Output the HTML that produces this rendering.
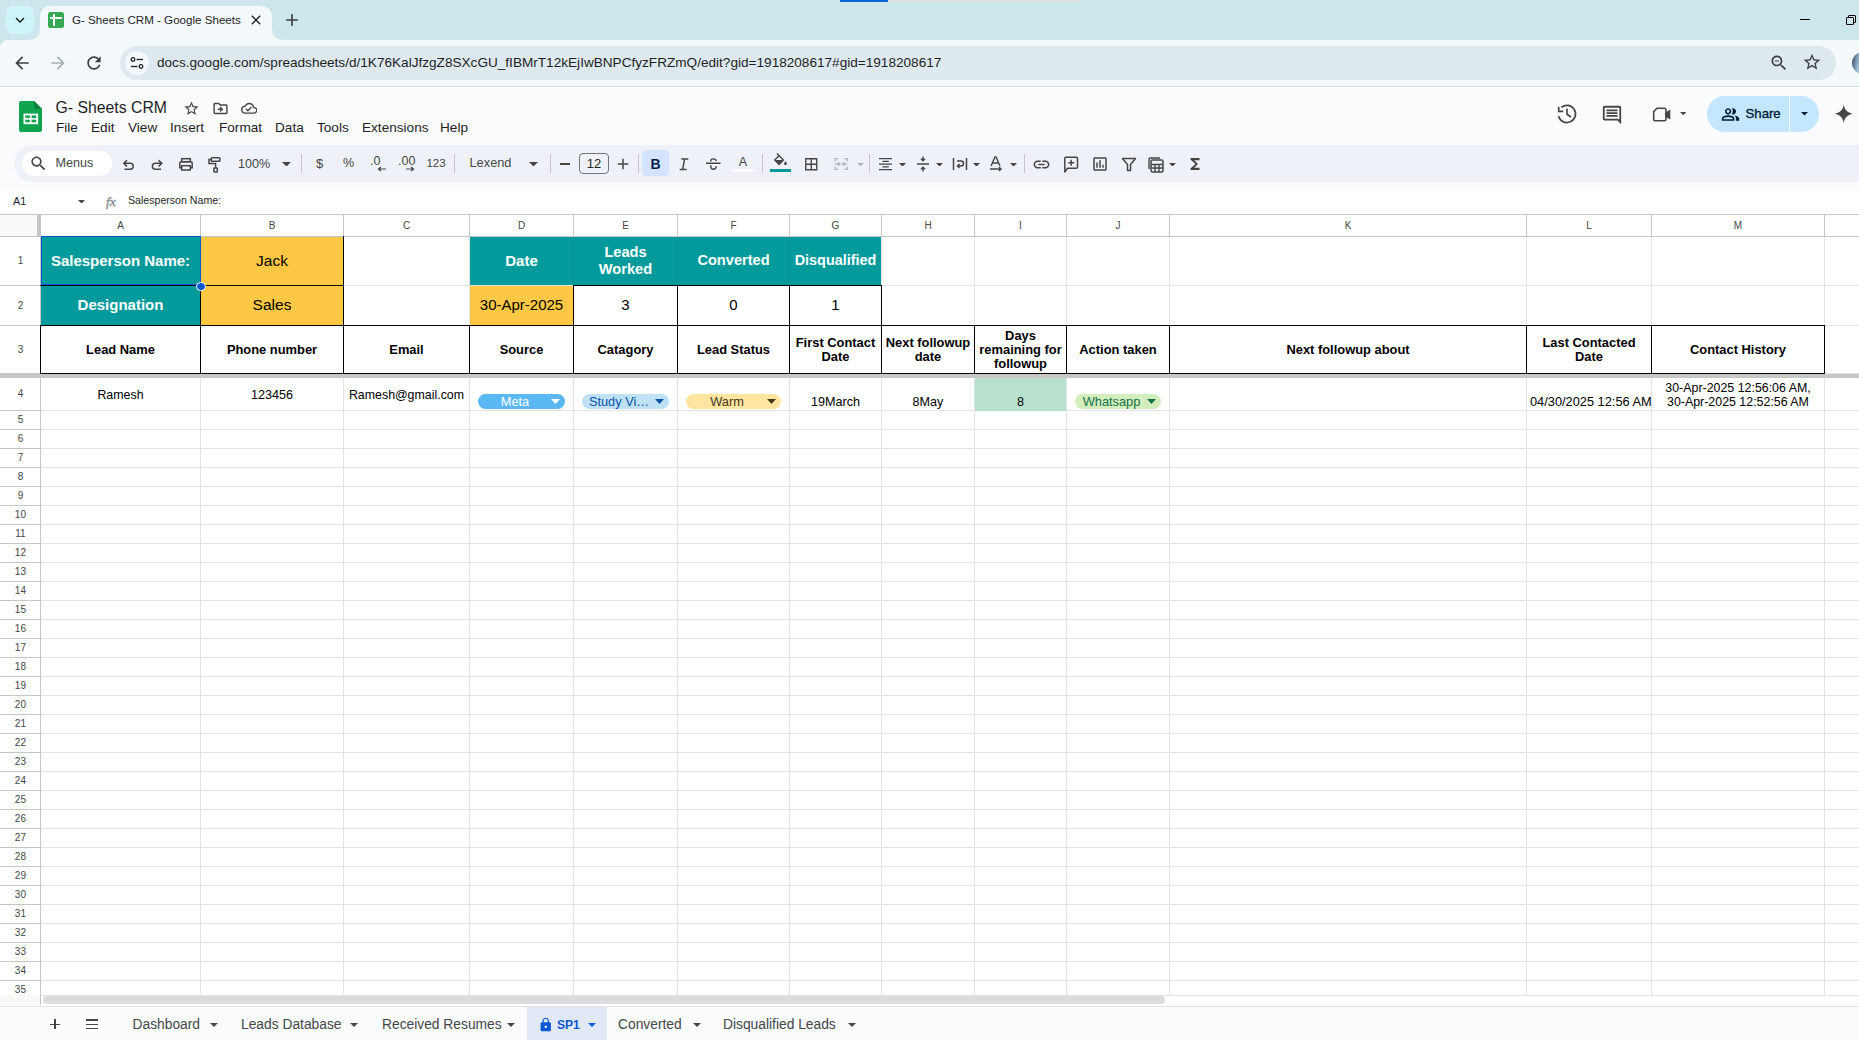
<!DOCTYPE html>
<html><head><meta charset="utf-8"><title>G- Sheets CRM - Google Sheets</title>
<style>
html,body{margin:0;padding:0;width:1859px;height:1040px;overflow:hidden;background:#f9fbfd;font-family:"Liberation Sans", sans-serif;}
body{position:relative}
div,svg{box-sizing:border-box}
</style></head><body>
<div style="position:absolute;left:0px;top:0px;width:1859px;height:40px;background:#cde6eb;"></div>
<div style="position:absolute;left:840px;top:0px;width:48px;height:1.5px;background:#0b63d6;"></div>
<div style="position:absolute;left:888px;top:0px;width:193px;height:1.5px;background:#e2e2e4;"></div>
<div style="position:absolute;left:6px;top:6px;width:28px;height:28px;background:#cff5fc;border-radius:8px"></div>
<svg style="position:absolute;left:10.5px;top:11.0px;width:18px;height:18px" viewBox="0 0 24 24" fill="#1f1f1f" ><path d="M16.59 8.59L12 13.17 7.41 8.59 6 10l6 6 6-6z"/></svg>
<div style="position:absolute;left:40px;top:6px;width:232px;height:40px;background:#f3f8fb;border-radius:10px 10px 0 0"></div>
<svg style="position:absolute;left:30px;top:30px;width:10px;height:10px" viewBox="0 0 10 10" fill="#f3f8fb" ><path d="M10 0V10H0A10 10 0 0 0 10 0Z"/></svg>
<svg style="position:absolute;left:272px;top:30px;width:10px;height:10px" viewBox="0 0 10 10" fill="#f3f8fb" ><path d="M0 0V10H10A10 10 0 0 1 0 0Z"/></svg>
<div style="position:absolute;left:48px;top:12px;width:16px;height:16px;background:#34a853;border-radius:2.5px"></div>
<div style="position:absolute;left:50px;top:17px;width:12px;height:2px;background:#ffffff;"></div>
<div style="position:absolute;left:53px;top:14px;width:2px;height:12px;background:#ffffff;"></div>
<div style="position:absolute;left:72px;top:14.3px;font-size:11.6px;line-height:11.6px;color:#1f1f1f;font-weight:normal;white-space:nowrap;">G- Sheets CRM - Google Sheets</div>
<svg style="position:absolute;left:248.0px;top:12.0px;width:16px;height:16px" viewBox="0 0 24 24" fill="#1f1f1f" ><path d="M19 6.41L17.59 5 12 10.59 6.41 5 5 6.41 10.59 12 5 17.59 6.41 19 12 13.41 17.59 19 19 17.59 13.41 12z"/></svg>
<svg style="position:absolute;left:282.0px;top:10.0px;width:20px;height:20px" viewBox="0 0 24 24" fill="#3c4043" ><path d="M19 13h-6v6h-2v-6H5v-2h6V5h2v6h6v2z"/></svg>
<div style="position:absolute;left:1800px;top:19px;width:10px;height:1px;background:#000000;"></div>
<div style="position:absolute;left:1848px;top:15px;width:8px;height:8px;background:transparent;border:1px solid #000;border-radius:1px"></div>
<div style="position:absolute;left:1846px;top:17px;width:8px;height:8px;background:#cde6eb;border:1px solid #000;border-radius:1px"></div>
<div style="position:absolute;left:0px;top:40px;width:1859px;height:46px;background:#f3f8fb;"></div>
<div style="position:absolute;left:0px;top:86px;width:1859px;height:1px;background:#d3dfe4;"></div>
<svg style="position:absolute;left:0px;top:40px;width:8px;height:8px" viewBox="0 0 8 8" fill="#cde6eb" ><path d="M0 0H8A8 8 0 0 0 0 8Z"/></svg>
<svg style="position:absolute;left:12.0px;top:53.0px;width:20px;height:20px" viewBox="0 0 24 24" fill="#3c4043" ><path d="M20 11H7.83l5.59-5.59L12 4l-8 8 8 8 1.41-1.41L7.83 13H20v-2z"/></svg>
<svg style="position:absolute;left:48.0px;top:53.0px;width:20px;height:20px" viewBox="0 0 24 24" fill="#a6aeb2" ><path d="M12 4l-1.41 1.41L16.17 11H4v2h12.17l-5.58 5.59L12 20l8-8z"/></svg>
<svg style="position:absolute;left:84.0px;top:53.0px;width:20px;height:20px" viewBox="0 0 24 24" fill="#3c4043" ><path d="M17.65 6.35C16.2 4.9 14.21 4 12 4c-4.42 0-7.99 3.58-7.99 8s3.57 8 7.99 8c3.73 0 6.84-2.55 7.73-6h-2.08c-.82 2.33-3.04 4-5.65 4-3.31 0-6-2.69-6-6s2.69-6 6-6c1.66 0 3.14.69 4.22 1.78L13 11h7V4l-2.35 2.35z"/></svg>
<div style="position:absolute;left:120px;top:46px;width:1716px;height:34px;background:#dde9ee;border-radius:17px"></div>
<div style="position:absolute;left:125px;top:51px;width:24px;height:24px;background:#f3f8fb;border-radius:12px"></div>
<svg style="position:absolute;left:130px;top:56px;width:14px;height:14px" viewBox="0 0 14 14" fill="none" ><circle cx="3" cy="3.5" r="1.8" fill="none" stroke="#1f1f1f" stroke-width="1.3"/><path d="M6.5 3.5H13" stroke="#1f1f1f" stroke-width="1.3"/><circle cx="11" cy="10.5" r="1.8" fill="none" stroke="#1f1f1f" stroke-width="1.3"/><path d="M1 10.5H7.5" stroke="#1f1f1f" stroke-width="1.3"/></svg>
<div style="position:absolute;left:157px;top:56.3px;font-size:13.6px;line-height:13.6px;color:#1f1f1f;font-weight:normal;white-space:nowrap;">docs.google.com/spreadsheets/d/1K76KalJfzgZ8SXcGU_fIBMrT12kEjIwBNPCfyzFRZmQ/edit?gid=1918208617#gid=1918208617</div>
<svg style="position:absolute;left:1769.0px;top:53.0px;width:20px;height:20px" viewBox="0 0 24 24" fill="#3c4043" ><path d="M15.5 14h-.79l-.28-.27C15.41 12.59 16 11.11 16 9.5 16 5.91 13.09 3 9.5 3S3 5.91 3 9.5 5.91 16 9.5 16c1.61 0 3.09-.59 4.23-1.57l.27.28v.79l5 4.99L20.49 19l-4.99-5zm-6 0C7.01 14 5 11.99 5 9.5S7.01 5 9.5 5 14 7.01 14 9.5 11.99 14 9.5 14zM7 9h5v1.2H7z"/></svg>
<svg style="position:absolute;left:1802.0px;top:52.0px;width:20px;height:20px" viewBox="0 0 24 24" fill="#3c4043" ><path d="M22 9.24l-7.19-.62L12 2 9.19 8.63 2 9.24l5.46 4.73L5.82 21 12 17.27 18.18 21l-1.63-7.03L22 9.24zM12 15.4l-3.76 2.27 1-4.28-3.32-2.88 4.38-.38L12 6.1l1.71 4.04 4.38.38-3.32 2.88 1 4.28L12 15.4z"/></svg>
<div style="position:absolute;left:1851.5px;top:51.5px;width:22px;height:22px;background:linear-gradient(100deg, #2a3f5c 0%, #a9c4d8 35%, #8aa6bf 55%, #24406a 80%);border-radius:11px"></div>
<div style="position:absolute;left:0px;top:87px;width:1859px;height:127px;background:#f9fbfd;"></div>
<svg style="position:absolute;left:19px;top:101px;width:23px;height:31px" viewBox="0 0 23 31" fill="none" ><path d="M2 0H15L23 8V29a2 2 0 0 1-2 2H2a2 2 0 0 1-2-2V2a2 2 0 0 1 2-2Z" fill="#0fa34f"/><path d="M15 0L23 8H17a2 2 0 0 1-2-2Z" fill="#0a7f3b"/><rect x="4.5" y="12.6" width="14.6" height="10.6" fill="#fff"/><rect x="6.3" y="14.4" width="4.6" height="2.6" fill="#0fa34f"/><rect x="12.6" y="14.4" width="4.6" height="2.6" fill="#0fa34f"/><rect x="6.3" y="18.7" width="4.6" height="2.6" fill="#0fa34f"/><rect x="12.6" y="18.7" width="4.6" height="2.6" fill="#0fa34f"/></svg>
<div style="position:absolute;left:55.5px;top:100.2px;font-size:15.8px;line-height:15.8px;color:#1f1f1f;font-weight:normal;white-space:nowrap;">G- Sheets CRM</div>
<svg style="position:absolute;left:183.0px;top:99.5px;width:17px;height:17px" viewBox="0 0 24 24" fill="#444746" ><path d="M22 9.24l-7.19-.62L12 2 9.19 8.63 2 9.24l5.46 4.73L5.82 21 12 17.27 18.18 21l-1.63-7.03L22 9.24zM12 15.4l-3.76 2.27 1-4.28-3.32-2.88 4.38-.38L12 6.1l1.71 4.04 4.38.38-3.32 2.88 1 4.28L12 15.4z"/></svg>
<svg style="position:absolute;left:212.0px;top:99.5px;width:17px;height:17px" viewBox="0 0 24 24" fill="#444746" ><path d="M20 6h-8l-2-2H4c-1.1 0-2 .9-2 2v12c0 1.1.9 2 2 2h16c1.1 0 2-.9 2-2V8c0-1.1-.9-2-2-2zm0 12H4V6h5.17l2 2H20v10zm-7.84-6H8v2h4.16l-1.59 1.59L11.99 17 16 13.01 11.99 9l-1.41 1.41L12.16 12z"/></svg>
<svg style="position:absolute;left:240.75px;top:100.05px;width:16.5px;height:16.5px" viewBox="0 0 24 24" fill="#444746" ><path d="M19.35 10.04C18.67 6.59 15.64 4 12 4 9.11 4 6.6 5.64 5.35 8.04 2.34 8.36 0 10.91 0 14c0 3.31 2.69 6 6 6h13c2.76 0 5-2.24 5-5 0-2.64-2.05-4.78-4.65-4.96zM19 18H6c-2.21 0-4-1.79-4-4 0-2.05 1.53-3.76 3.56-3.97l1.07-.11.5-.95C8.08 7.14 9.94 6 12 6c2.62 0 4.88 1.86 5.39 4.43l.3 1.5 1.53.11c1.56.1 2.78 1.41 2.78 2.96 0 1.65-1.35 3-3 3zm-9-3.82l-2.09-2.09L6.5 13.5 10 17l6.01-6.01-1.41-1.41z"/></svg>
<div style="position:absolute;left:56px;top:120.5px;font-size:13.6px;line-height:13.6px;color:#1f1f1f;font-weight:normal;white-space:nowrap;">File</div>
<div style="position:absolute;left:91px;top:120.5px;font-size:13.6px;line-height:13.6px;color:#1f1f1f;font-weight:normal;white-space:nowrap;">Edit</div>
<div style="position:absolute;left:128px;top:120.5px;font-size:13.6px;line-height:13.6px;color:#1f1f1f;font-weight:normal;white-space:nowrap;">View</div>
<div style="position:absolute;left:170px;top:120.5px;font-size:13.6px;line-height:13.6px;color:#1f1f1f;font-weight:normal;white-space:nowrap;">Insert</div>
<div style="position:absolute;left:219px;top:120.5px;font-size:13.6px;line-height:13.6px;color:#1f1f1f;font-weight:normal;white-space:nowrap;">Format</div>
<div style="position:absolute;left:275px;top:120.5px;font-size:13.6px;line-height:13.6px;color:#1f1f1f;font-weight:normal;white-space:nowrap;">Data</div>
<div style="position:absolute;left:317px;top:120.5px;font-size:13.6px;line-height:13.6px;color:#1f1f1f;font-weight:normal;white-space:nowrap;">Tools</div>
<div style="position:absolute;left:362px;top:120.5px;font-size:13.6px;line-height:13.6px;color:#1f1f1f;font-weight:normal;white-space:nowrap;">Extensions</div>
<div style="position:absolute;left:440px;top:120.5px;font-size:13.6px;line-height:13.6px;color:#1f1f1f;font-weight:normal;white-space:nowrap;">Help</div>
<svg style="position:absolute;left:0px;top:0px;width:1859px;height:1040px" viewBox="0 0 1859 1040" fill="none" ><g fill="none" stroke="#444746" stroke-width="1.7"><path d="M1558.6 116.2A8.6 8.6 0 1 0 1561.4 107.3"/><path d="M1558.7 106.8V111.3H1563.3"/><path d="M1567 108.8V114.3L1571 117"/></g></svg>
<svg style="position:absolute;left:1601.0px;top:104.0px;width:22px;height:22px" viewBox="0 0 24 24" fill="#444746" ><path d="M21.99 4c0-1.1-.89-2-1.99-2H4c-1.1 0-2 .9-2 2v12c0 1.1.9 2 2 2h14l4 4-.01-18zM20 4v13.17L18.83 16H4V4h16zM6 12h12v2H6zm0-3h12v2H6zm0-3h12v2H6z"/></svg>
<svg style="position:absolute;left:0px;top:0px;width:1859px;height:1040px" viewBox="0 0 1859 1040" fill="none" ><path d="M1657 108.3H1664.6Q1665.9 108.3 1665.9 109.6V119.5Q1665.9 120.8 1664.6 120.8H1655Q1653.7 120.8 1653.7 119.5V111.6Z" fill="none" stroke="#444746" stroke-width="1.6"/><path d="M1665.5 112.5L1670.3 109.6V119.6L1665.5 116.7Z" fill="#444746"/></svg>
<svg style="position:absolute;left:1679.75px;top:111.9px;width:6.5px;height:3.2px" viewBox="0 0 6.5 3.2" fill="#444746" ><path d="M0 0H6.5L3.25 3.2Z"/></svg>
<div style="position:absolute;left:1707px;top:96px;width:112px;height:36px;background:#c2e7ff;border-radius:18px"></div>
<div style="position:absolute;left:1789px;top:96px;width:1px;height:36px;background:#f9fbfd;"></div>
<svg style="position:absolute;left:1720.5px;top:104.5px;width:19px;height:19px" viewBox="0 0 24 24" fill="#001d35" ><path d="M16.67 13.13C18.04 14.06 19 15.32 19 17v3h4v-3c0-2.18-3.57-3.47-6.33-3.87zM15 12c2.21 0 4-1.79 4-4s-1.79-4-4-4c-.47 0-.91.1-1.33.24C14.5 5.27 15 6.58 15 8s-.5 2.73-1.33 3.76c.42.14.86.24 1.33.24zM9 12c2.21 0 4-1.79 4-4s-1.79-4-4-4-4 1.79-4 4 1.79 4 4 4zm0-6c1.1 0 2 .9 2 2s-.9 2-2 2-2-.9-2-2 .9-2 2-2zM9 13c-2.67 0-8 1.34-8 4v3h16v-3c0-2.66-5.33-4-8-4zm6 5H3v-.99C3.2 16.29 6.3 15 9 15s5.8 1.29 6 2v1z"/></svg>
<div style="position:absolute;left:1745.5px;top:107px;font-size:13.2px;line-height:13.2px;color:#001d35;font-weight:normal;white-space:nowrap;-webkit-text-stroke:0.35px #001d35">Share</div>
<svg style="position:absolute;left:1800.5px;top:112.45px;width:7px;height:3.5px" viewBox="0 0 7 3.5" fill="#001d35" ><path d="M0 0H7L3.5 3.5Z"/></svg>
<svg style="position:absolute;left:1834px;top:104px;width:19.5px;height:19.5px" viewBox="0 0 20 20" fill="#444746" ><path d="M10 0C10.3 5.6 14.4 9.7 20 10 14.4 10.3 10.3 14.4 10 20 9.7 14.4 5.6 10.3 0 10 5.6 9.7 9.7 5.6 10 0Z"/></svg>
<div style="position:absolute;left:14px;top:145px;width:1845px;height:37px;background:#eef2f8;border-radius:18.5px 0 0 18.5px"></div>
<div style="position:absolute;left:22px;top:151px;width:90px;height:25px;background:#ffffff;border-radius:12.5px"></div>
<svg style="position:absolute;left:29.0px;top:154.0px;width:19px;height:19px" viewBox="0 0 24 24" fill="#444746" ><path d="M15.5 14h-.79l-.28-.27C15.41 12.59 16 11.11 16 9.5 16 5.91 13.09 3 9.5 3S3 5.91 3 9.5 5.91 16 9.5 16c1.61 0 3.09-.59 4.23-1.57l.27.28v.79l5 4.99L20.49 19l-4.99-5zm-6 0C7.01 14 5 11.99 5 9.5S7.01 5 9.5 5 14 7.01 14 9.5 11.99 14 9.5 14z"/></svg>
<div style="position:absolute;left:55.5px;top:157px;font-size:12.6px;line-height:12.6px;color:#444746;font-weight:normal;white-space:nowrap;">Menus</div>
<svg style="position:absolute;left:0px;top:0px;width:1859px;height:1040px" viewBox="0 0 1859 1040" fill="none" ><g fill="none" stroke="#444746" stroke-width="1.5"><path d="M127 160.2L123.8 163.3 127 166.4M124 163.3H130.2A3 3 0 0 1 130.2 169.3H124.5"/><path d="M158.6 160.2L161.8 163.3 158.6 166.4M161.6 163.3H155.4A3 3 0 0 0 155.4 169.3H161"/><rect x="181.7" y="158.7" width="8.6" height="3"/><path d="M181.5 167.8H179.8V163.2Q179.8 161.8 181.2 161.8H190.8Q192.2 161.8 192.2 163.2V167.8H190.5"/><rect x="181.7" y="165.7" width="8.6" height="4.3"/><rect x="211.3" y="157.8" width="8.6" height="3.4" rx="0.8"/><path d="M211.3 159.5H209V163.6H215.6V167.8"/><rect x="213.9" y="168" width="3.4" height="4" rx="0.6"/></g></svg>
<div style="position:absolute;left:238px;top:157.5px;font-size:12.6px;line-height:12.6px;color:#444746;font-weight:normal;white-space:nowrap;">100%</div>
<svg style="position:absolute;left:281.5px;top:161.75px;width:9px;height:4.5px" viewBox="0 0 9 4.5" fill="#444746" ><path d="M0 0H9L4.5 4.5Z"/></svg>
<div style="position:absolute;left:301px;top:154px;width:1px;height:19px;background:#c7c7c7;"></div>
<div style="position:absolute;left:19.5px;width:600px;top:157.0px;text-align:center;font-size:13px;line-height:13px;color:#444746;font-weight:normal;white-space:nowrap;">$</div>
<div style="position:absolute;left:48.5px;width:600px;top:157.25px;text-align:center;font-size:12.5px;line-height:12.5px;color:#444746;font-weight:normal;white-space:nowrap;">%</div>
<div style="position:absolute;left:370px;top:154.5px;font-size:12.5px;line-height:12.5px;color:#444746;font-weight:normal;white-space:nowrap;">.0</div>
<svg style="position:absolute;left:377px;top:166px;width:10px;height:6px" viewBox="0 0 10 6" fill="none" ><path d="M9 3H2M4 1L1.5 3 4 5" fill="none" stroke="#444746" stroke-width="1.2"/></svg>
<div style="position:absolute;left:398px;top:154.5px;font-size:12.5px;line-height:12.5px;color:#444746;font-weight:normal;white-space:nowrap;">.00</div>
<svg style="position:absolute;left:405px;top:166px;width:10px;height:6px" viewBox="0 0 10 6" fill="none" ><path d="M1 3H8M6 1L8.5 3 6 5" fill="none" stroke="#444746" stroke-width="1.2"/></svg>
<div style="position:absolute;left:136px;width:600px;top:157.75px;text-align:center;font-size:11.5px;line-height:11.5px;color:#444746;font-weight:normal;white-space:nowrap;">123</div>
<div style="position:absolute;left:454px;top:154px;width:1px;height:19px;background:#c7c7c7;"></div>
<div style="position:absolute;left:469.5px;top:157px;font-size:12.8px;line-height:12.8px;color:#444746;font-weight:normal;white-space:nowrap;">Lexend</div>
<svg style="position:absolute;left:528.5px;top:161.75px;width:9px;height:4.5px" viewBox="0 0 9 4.5" fill="#444746" ><path d="M0 0H9L4.5 4.5Z"/></svg>
<div style="position:absolute;left:550px;top:154px;width:1px;height:19px;background:#c7c7c7;"></div>
<div style="position:absolute;left:559.5px;top:163.3px;width:10.5px;height:1.3px;background:#444746;"></div>
<div style="position:absolute;left:579px;top:153px;width:30px;height:21px;background:transparent;border:1px solid #747775;border-radius:4px;box-sizing:border-box"></div>
<div style="position:absolute;left:294px;width:600px;top:157.0px;text-align:center;font-size:13px;line-height:13px;color:#1f1f1f;font-weight:normal;white-space:nowrap;">12</div>
<svg style="position:absolute;left:614.0px;top:154.5px;width:18px;height:18px" viewBox="0 0 24 24" fill="#444746" ><path d="M19 13h-6v6h-2v-6H5v-2h6V5h2v6h6v2z"/></svg>
<div style="position:absolute;left:638px;top:154px;width:1px;height:19px;background:#c7c7c7;"></div>
<div style="position:absolute;left:642px;top:150px;width:27px;height:26px;background:#d3e3fd;border-radius:4px"></div>
<div style="position:absolute;left:355.5px;width:600px;top:157.0px;text-align:center;font-size:14px;line-height:14px;color:#041e49;font-weight:bold;white-space:nowrap;">B</div>
<svg style="position:absolute;left:0px;top:0px;width:1859px;height:1040px" viewBox="0 0 1859 1040" fill="none" ><path d="M681.3 159H688.3M679.6 169.5H686.6M684.6 159L682.6 169.5" fill="none" stroke="#444746" stroke-width="1.4"/></svg>
<svg style="position:absolute;left:0px;top:0px;width:1859px;height:1040px" viewBox="0 0 1859 1040" fill="none" ><path d="M706 163.3H720.5M710.6 161.6Q710.6 158.9 713.3 158.9Q716 158.9 716.3 161M710.7 165.2Q710.7 169.2 713.3 169.2Q716.2 169.2 716.2 166.3" fill="none" stroke="#444746" stroke-width="1.4"/></svg>
<div style="position:absolute;left:443px;width:600px;top:156.25px;text-align:center;font-size:12.5px;line-height:12.5px;color:#444746;font-weight:normal;white-space:nowrap;">A</div>
<div style="position:absolute;left:733px;top:169px;width:21px;height:3px;background:#ffffff;"></div>
<div style="position:absolute;left:762px;top:154px;width:1px;height:19px;background:#c7c7c7;"></div>
<svg style="position:absolute;left:771.5px;top:152.5px;width:17px;height:17px" viewBox="0 0 24 24" fill="#444746" ><path d="M16.56 8.94L7.62 0 6.21 1.41l2.38 2.38-5.15 5.15c-.59.59-.59 1.54 0 2.12l5.5 5.5c.29.29.68.44 1.06.44s.77-.15 1.06-.44l5.5-5.5c.59-.58.59-1.53 0-2.12zM5.21 10L10 5.21 14.79 10H5.21zM19 11.5s-2 2.17-2 3.5c0 1.1.9 2 2 2s2-.9 2-2c0-1.33-2-3.5-2-3.5z"/></svg>
<div style="position:absolute;left:770px;top:169px;width:21px;height:3px;background:#00999a;"></div>
<svg style="position:absolute;left:803.05px;top:155.75px;width:16.5px;height:16.5px" viewBox="0 0 24 24" fill="#444746" ><path d="M3 3v18h18V3H3zm8 16H5v-6h6v6zm0-8H5V5h6v6zm8 8h-6v-6h6v6zm0-8h-6V5h6v6z"/></svg>
<svg style="position:absolute;left:0px;top:0px;width:1859px;height:1040px" viewBox="0 0 1859 1040" fill="none" ><path d="M838.2 158.6H835.2V161.2M835.2 166.6V169.4H838.2M844 158.6H847.3V161.2M847.3 166.6V169.4H844M835.2 164H839.8M838 162.2L839.9 164 838 165.8M847.3 164H842.6M844.4 162.2L842.5 164 844.4 165.8" fill="none" stroke="#b3b6ba" stroke-width="1.4"/></svg>
<svg style="position:absolute;left:856.7px;top:162.60000000000002px;width:7px;height:3.4px" viewBox="0 0 7 3.4" fill="#b3b6ba" ><path d="M0 0H7L3.5 3.4Z"/></svg>
<div style="position:absolute;left:869px;top:154px;width:1px;height:19px;background:#c7c7c7;"></div>
<svg style="position:absolute;left:0px;top:0px;width:1859px;height:1040px" viewBox="0 0 1859 1040" fill="none" ><path d="M879 158.6H892M882.5 161.3H888.8M879 164H892M882.5 166.8H888.8M879 169.5H892" stroke="#444746" stroke-width="1.25"/></svg>
<svg style="position:absolute;left:899.0px;top:162.6px;width:7px;height:3.6px" viewBox="0 0 7 3.6" fill="#444746" ><path d="M0 0H7L3.5 3.6Z"/></svg>
<svg style="position:absolute;left:914.0px;top:155.0px;width:18px;height:18px" viewBox="0 0 24 24" fill="#444746" ><path d="M8 19h3v3h2v-3h3l-4-4-4 4zm8-14h-3V2h-2v3H8l4 4 4-4zM4 11v2h16v-2H4z"/></svg>
<svg style="position:absolute;left:936.0px;top:162.6px;width:7px;height:3.6px" viewBox="0 0 7 3.6" fill="#444746" ><path d="M0 0H7L3.5 3.6Z"/></svg>
<svg style="position:absolute;left:952px;top:156px;width:16px;height:16px" viewBox="0 0 16 16" fill="none" ><path d="M1.5 2V14M14.5 2V14M5 5H9a2.5 2.5 0 0 1 0 5H6M7.5 8L5.5 10 7.5 12" fill="none" stroke="#444746" stroke-width="1.5"/></svg>
<svg style="position:absolute;left:972.5px;top:162.6px;width:7px;height:3.6px" viewBox="0 0 7 3.6" fill="#444746" ><path d="M0 0H7L3.5 3.6Z"/></svg>
<svg style="position:absolute;left:988px;top:155px;width:17px;height:17px" viewBox="0 0 17 17" fill="none" ><path d="M3 11L7 2h1l4 9M4.5 8H10.5M2 14H13M11 12l2 2-2 2" fill="none" stroke="#444746" stroke-width="1.4"/></svg>
<svg style="position:absolute;left:1009.5px;top:162.6px;width:7px;height:3.6px" viewBox="0 0 7 3.6" fill="#444746" ><path d="M0 0H7L3.5 3.6Z"/></svg>
<div style="position:absolute;left:1024px;top:154px;width:1px;height:19px;background:#c7c7c7;"></div>
<svg style="position:absolute;left:1032.0px;top:154.5px;width:19px;height:19px" viewBox="0 0 24 24" fill="#444746" ><path d="M3.9 12c0-1.71 1.39-3.1 3.1-3.1h4V7H7c-2.76 0-5 2.24-5 5s2.24 5 5 5h4v-1.9H7c-1.71 0-3.1-1.39-3.1-3.1zM8 13h8v-2H8v2zm9-6h-4v1.9h4c1.71 0 3.1 1.39 3.1 3.1s-1.39 3.1-3.1 3.1h-4V17h4c2.76 0 5-2.24 5-5s-2.24-5-5-5z"/></svg>
<svg style="position:absolute;left:0px;top:0px;width:1859px;height:1040px" viewBox="0 0 1859 1040" fill="none" ><path d="M1064.8 172V158.3Q1064.8 157.3 1065.8 157.3H1076.5Q1077.5 157.3 1077.5 158.3V167.2Q1077.5 168.2 1076.5 168.2H1067.6Z" fill="none" stroke="#444746" stroke-width="1.5" stroke-linejoin="round"/><path d="M1071.2 159.8V165.8M1068.2 162.8H1074.2" stroke="#444746" stroke-width="1.5"/></svg>
<svg style="position:absolute;left:1091.0px;top:155.0px;width:18px;height:18px" viewBox="0 0 24 24" fill="#444746" ><path d="M19 3H5c-1.1 0-2 .9-2 2v14c0 1.1.9 2 2 2h14c1.1 0 2-.9 2-2V5c0-1.1-.9-2-2-2zm0 16H5V5h14v14zM7 10h2v7H7zm4-3h2v10h-2zm4 6h2v4h-2z"/></svg>
<svg style="position:absolute;left:1121px;top:157px;width:16px;height:15px" viewBox="0 0 16 15" fill="none" ><path d="M1.5 1.5H14.5L9.5 7.5V13.5H6.5V7.5Z" fill="none" stroke="#444746" stroke-width="1.5" stroke-linejoin="round"/></svg>
<svg style="position:absolute;left:1147px;top:156px;width:17px;height:17px" viewBox="0 0 17 17" fill="none" ><rect x="4" y="4" width="12" height="12" rx="1.5" fill="none" stroke="#444746" stroke-width="1.5"/><path d="M2 13V3.5A1.5 1.5 0 0 1 3.5 2H13M4 8.5H16M4 12H16M8 8.5V16M12 8.5V16" fill="none" stroke="#444746" stroke-width="1.4"/></svg>
<svg style="position:absolute;left:1169.0px;top:162.6px;width:7px;height:3.6px" viewBox="0 0 7 3.6" fill="#444746" ><path d="M0 0H7L3.5 3.6Z"/></svg>
<svg style="position:absolute;left:1186.0px;top:155.0px;width:18px;height:18px" viewBox="0 0 24 24" fill="#444746" ><path d="M18 4H6v2l6.5 6L6 18v2h12v-3h-7l5-5-5-5h7z"/></svg>
<div style="position:absolute;left:0px;top:189px;width:1859px;height:25px;background:#ffffff;"></div>
<div style="position:absolute;left:13px;top:196px;font-size:10.8px;line-height:10.8px;color:#1f1f1f;font-weight:normal;white-space:nowrap;">A1</div>
<svg style="position:absolute;left:77.7px;top:199.79999999999998px;width:7px;height:3.6px" viewBox="0 0 7 3.6" fill="#444746" ><path d="M0 0H7L3.5 3.6Z"/></svg>
<div style="position:absolute;left:106px;top:195px;font-size:13.5px;line-height:13.5px;color:#80868b;font-weight:normal;white-space:nowrap;font-family:'Liberation Serif';font-style:italic;-webkit-text-stroke:0.3px #80868b">fx</div>
<div style="position:absolute;left:128px;top:195px;font-size:10.6px;line-height:10.6px;color:#1f1f1f;font-weight:normal;white-space:nowrap;">Salesperson Name:</div>
<div style="position:absolute;left:0px;top:215px;width:1859px;height:21px;background:#ffffff;"></div>
<div style="position:absolute;left:0px;top:215px;width:37px;height:21px;background:#f8f9fa;"></div>
<div style="position:absolute;left:0px;top:237px;width:1859px;height:758px;background:#ffffff;"></div>
<div style="position:absolute;left:41px;top:285px;width:1818px;height:1px;background:#e2e3e3;"></div>
<div style="position:absolute;left:0px;top:285px;width:40px;height:1px;background:#c4c7c5;"></div>
<div style="position:absolute;left:41px;top:325px;width:1818px;height:1px;background:#e2e3e3;"></div>
<div style="position:absolute;left:0px;top:325px;width:40px;height:1px;background:#c4c7c5;"></div>
<div style="position:absolute;left:41px;top:373px;width:1818px;height:1px;background:#e2e3e3;"></div>
<div style="position:absolute;left:0px;top:373px;width:40px;height:1px;background:#c4c7c5;"></div>
<div style="position:absolute;left:41px;top:410px;width:1818px;height:1px;background:#e2e3e3;"></div>
<div style="position:absolute;left:0px;top:410px;width:40px;height:1px;background:#c4c7c5;"></div>
<div style="position:absolute;left:41px;top:429px;width:1818px;height:1px;background:#e2e3e3;"></div>
<div style="position:absolute;left:0px;top:429px;width:40px;height:1px;background:#c4c7c5;"></div>
<div style="position:absolute;left:41px;top:448px;width:1818px;height:1px;background:#e2e3e3;"></div>
<div style="position:absolute;left:0px;top:448px;width:40px;height:1px;background:#c4c7c5;"></div>
<div style="position:absolute;left:41px;top:467px;width:1818px;height:1px;background:#e2e3e3;"></div>
<div style="position:absolute;left:0px;top:467px;width:40px;height:1px;background:#c4c7c5;"></div>
<div style="position:absolute;left:41px;top:486px;width:1818px;height:1px;background:#e2e3e3;"></div>
<div style="position:absolute;left:0px;top:486px;width:40px;height:1px;background:#c4c7c5;"></div>
<div style="position:absolute;left:41px;top:505px;width:1818px;height:1px;background:#e2e3e3;"></div>
<div style="position:absolute;left:0px;top:505px;width:40px;height:1px;background:#c4c7c5;"></div>
<div style="position:absolute;left:41px;top:524px;width:1818px;height:1px;background:#e2e3e3;"></div>
<div style="position:absolute;left:0px;top:524px;width:40px;height:1px;background:#c4c7c5;"></div>
<div style="position:absolute;left:41px;top:543px;width:1818px;height:1px;background:#e2e3e3;"></div>
<div style="position:absolute;left:0px;top:543px;width:40px;height:1px;background:#c4c7c5;"></div>
<div style="position:absolute;left:41px;top:562px;width:1818px;height:1px;background:#e2e3e3;"></div>
<div style="position:absolute;left:0px;top:562px;width:40px;height:1px;background:#c4c7c5;"></div>
<div style="position:absolute;left:41px;top:581px;width:1818px;height:1px;background:#e2e3e3;"></div>
<div style="position:absolute;left:0px;top:581px;width:40px;height:1px;background:#c4c7c5;"></div>
<div style="position:absolute;left:41px;top:600px;width:1818px;height:1px;background:#e2e3e3;"></div>
<div style="position:absolute;left:0px;top:600px;width:40px;height:1px;background:#c4c7c5;"></div>
<div style="position:absolute;left:41px;top:619px;width:1818px;height:1px;background:#e2e3e3;"></div>
<div style="position:absolute;left:0px;top:619px;width:40px;height:1px;background:#c4c7c5;"></div>
<div style="position:absolute;left:41px;top:638px;width:1818px;height:1px;background:#e2e3e3;"></div>
<div style="position:absolute;left:0px;top:638px;width:40px;height:1px;background:#c4c7c5;"></div>
<div style="position:absolute;left:41px;top:657px;width:1818px;height:1px;background:#e2e3e3;"></div>
<div style="position:absolute;left:0px;top:657px;width:40px;height:1px;background:#c4c7c5;"></div>
<div style="position:absolute;left:41px;top:676px;width:1818px;height:1px;background:#e2e3e3;"></div>
<div style="position:absolute;left:0px;top:676px;width:40px;height:1px;background:#c4c7c5;"></div>
<div style="position:absolute;left:41px;top:695px;width:1818px;height:1px;background:#e2e3e3;"></div>
<div style="position:absolute;left:0px;top:695px;width:40px;height:1px;background:#c4c7c5;"></div>
<div style="position:absolute;left:41px;top:714px;width:1818px;height:1px;background:#e2e3e3;"></div>
<div style="position:absolute;left:0px;top:714px;width:40px;height:1px;background:#c4c7c5;"></div>
<div style="position:absolute;left:41px;top:733px;width:1818px;height:1px;background:#e2e3e3;"></div>
<div style="position:absolute;left:0px;top:733px;width:40px;height:1px;background:#c4c7c5;"></div>
<div style="position:absolute;left:41px;top:752px;width:1818px;height:1px;background:#e2e3e3;"></div>
<div style="position:absolute;left:0px;top:752px;width:40px;height:1px;background:#c4c7c5;"></div>
<div style="position:absolute;left:41px;top:771px;width:1818px;height:1px;background:#e2e3e3;"></div>
<div style="position:absolute;left:0px;top:771px;width:40px;height:1px;background:#c4c7c5;"></div>
<div style="position:absolute;left:41px;top:790px;width:1818px;height:1px;background:#e2e3e3;"></div>
<div style="position:absolute;left:0px;top:790px;width:40px;height:1px;background:#c4c7c5;"></div>
<div style="position:absolute;left:41px;top:809px;width:1818px;height:1px;background:#e2e3e3;"></div>
<div style="position:absolute;left:0px;top:809px;width:40px;height:1px;background:#c4c7c5;"></div>
<div style="position:absolute;left:41px;top:828px;width:1818px;height:1px;background:#e2e3e3;"></div>
<div style="position:absolute;left:0px;top:828px;width:40px;height:1px;background:#c4c7c5;"></div>
<div style="position:absolute;left:41px;top:847px;width:1818px;height:1px;background:#e2e3e3;"></div>
<div style="position:absolute;left:0px;top:847px;width:40px;height:1px;background:#c4c7c5;"></div>
<div style="position:absolute;left:41px;top:866px;width:1818px;height:1px;background:#e2e3e3;"></div>
<div style="position:absolute;left:0px;top:866px;width:40px;height:1px;background:#c4c7c5;"></div>
<div style="position:absolute;left:41px;top:885px;width:1818px;height:1px;background:#e2e3e3;"></div>
<div style="position:absolute;left:0px;top:885px;width:40px;height:1px;background:#c4c7c5;"></div>
<div style="position:absolute;left:41px;top:904px;width:1818px;height:1px;background:#e2e3e3;"></div>
<div style="position:absolute;left:0px;top:904px;width:40px;height:1px;background:#c4c7c5;"></div>
<div style="position:absolute;left:41px;top:923px;width:1818px;height:1px;background:#e2e3e3;"></div>
<div style="position:absolute;left:0px;top:923px;width:40px;height:1px;background:#c4c7c5;"></div>
<div style="position:absolute;left:41px;top:942px;width:1818px;height:1px;background:#e2e3e3;"></div>
<div style="position:absolute;left:0px;top:942px;width:40px;height:1px;background:#c4c7c5;"></div>
<div style="position:absolute;left:41px;top:961px;width:1818px;height:1px;background:#e2e3e3;"></div>
<div style="position:absolute;left:0px;top:961px;width:40px;height:1px;background:#c4c7c5;"></div>
<div style="position:absolute;left:41px;top:980px;width:1818px;height:1px;background:#e2e3e3;"></div>
<div style="position:absolute;left:0px;top:980px;width:40px;height:1px;background:#c4c7c5;"></div>
<div style="position:absolute;left:200px;top:215px;width:1px;height:21px;background:#c4c7c5;"></div>
<div style="position:absolute;left:200px;top:237px;width:1px;height:758px;background:#e2e3e3;"></div>
<div style="position:absolute;left:343px;top:215px;width:1px;height:21px;background:#c4c7c5;"></div>
<div style="position:absolute;left:343px;top:237px;width:1px;height:758px;background:#e2e3e3;"></div>
<div style="position:absolute;left:469px;top:215px;width:1px;height:21px;background:#c4c7c5;"></div>
<div style="position:absolute;left:469px;top:237px;width:1px;height:758px;background:#e2e3e3;"></div>
<div style="position:absolute;left:573px;top:215px;width:1px;height:21px;background:#c4c7c5;"></div>
<div style="position:absolute;left:573px;top:237px;width:1px;height:758px;background:#e2e3e3;"></div>
<div style="position:absolute;left:677px;top:215px;width:1px;height:21px;background:#c4c7c5;"></div>
<div style="position:absolute;left:677px;top:237px;width:1px;height:758px;background:#e2e3e3;"></div>
<div style="position:absolute;left:789px;top:215px;width:1px;height:21px;background:#c4c7c5;"></div>
<div style="position:absolute;left:789px;top:237px;width:1px;height:758px;background:#e2e3e3;"></div>
<div style="position:absolute;left:881px;top:215px;width:1px;height:21px;background:#c4c7c5;"></div>
<div style="position:absolute;left:881px;top:237px;width:1px;height:758px;background:#e2e3e3;"></div>
<div style="position:absolute;left:974px;top:215px;width:1px;height:21px;background:#c4c7c5;"></div>
<div style="position:absolute;left:974px;top:237px;width:1px;height:758px;background:#e2e3e3;"></div>
<div style="position:absolute;left:1066px;top:215px;width:1px;height:21px;background:#c4c7c5;"></div>
<div style="position:absolute;left:1066px;top:237px;width:1px;height:758px;background:#e2e3e3;"></div>
<div style="position:absolute;left:1169px;top:215px;width:1px;height:21px;background:#c4c7c5;"></div>
<div style="position:absolute;left:1169px;top:237px;width:1px;height:758px;background:#e2e3e3;"></div>
<div style="position:absolute;left:1526px;top:215px;width:1px;height:21px;background:#c4c7c5;"></div>
<div style="position:absolute;left:1526px;top:237px;width:1px;height:758px;background:#e2e3e3;"></div>
<div style="position:absolute;left:1651px;top:215px;width:1px;height:21px;background:#c4c7c5;"></div>
<div style="position:absolute;left:1651px;top:237px;width:1px;height:758px;background:#e2e3e3;"></div>
<div style="position:absolute;left:1824px;top:215px;width:1px;height:21px;background:#c4c7c5;"></div>
<div style="position:absolute;left:1824px;top:237px;width:1px;height:758px;background:#e2e3e3;"></div>
<div style="position:absolute;left:1859px;top:215px;width:1px;height:21px;background:#c4c7c5;"></div>
<div style="position:absolute;left:1859px;top:237px;width:1px;height:758px;background:#e2e3e3;"></div>
<div style="position:absolute;left:0px;top:214px;width:1859px;height:1px;background:#c4c7c5;"></div>
<div style="position:absolute;left:0px;top:236px;width:1859px;height:1px;background:#c4c7c5;"></div>
<div style="position:absolute;left:40px;top:237px;width:1px;height:758px;background:#c4c7c5;"></div>
<div style="position:absolute;left:37px;top:214px;width:4px;height:23px;background:#c4c7c5;"></div>
<div style="position:absolute;left:-179.5px;width:600px;top:221.0px;text-align:center;font-size:10px;line-height:10px;color:#444746;font-weight:normal;white-space:nowrap;">A</div>
<div style="position:absolute;left:-28.0px;width:600px;top:221.0px;text-align:center;font-size:10px;line-height:10px;color:#444746;font-weight:normal;white-space:nowrap;">B</div>
<div style="position:absolute;left:106.5px;width:600px;top:221.0px;text-align:center;font-size:10px;line-height:10px;color:#444746;font-weight:normal;white-space:nowrap;">C</div>
<div style="position:absolute;left:221.5px;width:600px;top:221.0px;text-align:center;font-size:10px;line-height:10px;color:#444746;font-weight:normal;white-space:nowrap;">D</div>
<div style="position:absolute;left:325.5px;width:600px;top:221.0px;text-align:center;font-size:10px;line-height:10px;color:#444746;font-weight:normal;white-space:nowrap;">E</div>
<div style="position:absolute;left:433.5px;width:600px;top:221.0px;text-align:center;font-size:10px;line-height:10px;color:#444746;font-weight:normal;white-space:nowrap;">F</div>
<div style="position:absolute;left:535.5px;width:600px;top:221.0px;text-align:center;font-size:10px;line-height:10px;color:#444746;font-weight:normal;white-space:nowrap;">G</div>
<div style="position:absolute;left:628.0px;width:600px;top:221.0px;text-align:center;font-size:10px;line-height:10px;color:#444746;font-weight:normal;white-space:nowrap;">H</div>
<div style="position:absolute;left:720.5px;width:600px;top:221.0px;text-align:center;font-size:10px;line-height:10px;color:#444746;font-weight:normal;white-space:nowrap;">I</div>
<div style="position:absolute;left:818.0px;width:600px;top:221.0px;text-align:center;font-size:10px;line-height:10px;color:#444746;font-weight:normal;white-space:nowrap;">J</div>
<div style="position:absolute;left:1048.0px;width:600px;top:221.0px;text-align:center;font-size:10px;line-height:10px;color:#444746;font-weight:normal;white-space:nowrap;">K</div>
<div style="position:absolute;left:1289.0px;width:600px;top:221.0px;text-align:center;font-size:10px;line-height:10px;color:#444746;font-weight:normal;white-space:nowrap;">L</div>
<div style="position:absolute;left:1438.0px;width:600px;top:221.0px;text-align:center;font-size:10px;line-height:10px;color:#444746;font-weight:normal;white-space:nowrap;">M</div>
<div style="position:absolute;left:-279.6px;width:600px;top:256.4px;text-align:center;font-size:10px;line-height:10px;color:#444746;font-weight:normal;white-space:nowrap;">1</div>
<div style="position:absolute;left:-279.6px;width:600px;top:300.9px;text-align:center;font-size:10px;line-height:10px;color:#444746;font-weight:normal;white-space:nowrap;">2</div>
<div style="position:absolute;left:-279.6px;width:600px;top:344.9px;text-align:center;font-size:10px;line-height:10px;color:#444746;font-weight:normal;white-space:nowrap;">3</div>
<div style="position:absolute;left:-279.6px;width:600px;top:389.4px;text-align:center;font-size:10px;line-height:10px;color:#444746;font-weight:normal;white-space:nowrap;">4</div>
<div style="position:absolute;left:-279.6px;width:600px;top:415.4px;text-align:center;font-size:10px;line-height:10px;color:#444746;font-weight:normal;white-space:nowrap;">5</div>
<div style="position:absolute;left:-279.6px;width:600px;top:434.4px;text-align:center;font-size:10px;line-height:10px;color:#444746;font-weight:normal;white-space:nowrap;">6</div>
<div style="position:absolute;left:-279.6px;width:600px;top:453.4px;text-align:center;font-size:10px;line-height:10px;color:#444746;font-weight:normal;white-space:nowrap;">7</div>
<div style="position:absolute;left:-279.6px;width:600px;top:472.4px;text-align:center;font-size:10px;line-height:10px;color:#444746;font-weight:normal;white-space:nowrap;">8</div>
<div style="position:absolute;left:-279.6px;width:600px;top:491.4px;text-align:center;font-size:10px;line-height:10px;color:#444746;font-weight:normal;white-space:nowrap;">9</div>
<div style="position:absolute;left:-279.6px;width:600px;top:510.4px;text-align:center;font-size:10px;line-height:10px;color:#444746;font-weight:normal;white-space:nowrap;">10</div>
<div style="position:absolute;left:-279.6px;width:600px;top:529.4px;text-align:center;font-size:10px;line-height:10px;color:#444746;font-weight:normal;white-space:nowrap;">11</div>
<div style="position:absolute;left:-279.6px;width:600px;top:548.4px;text-align:center;font-size:10px;line-height:10px;color:#444746;font-weight:normal;white-space:nowrap;">12</div>
<div style="position:absolute;left:-279.6px;width:600px;top:567.4px;text-align:center;font-size:10px;line-height:10px;color:#444746;font-weight:normal;white-space:nowrap;">13</div>
<div style="position:absolute;left:-279.6px;width:600px;top:586.4px;text-align:center;font-size:10px;line-height:10px;color:#444746;font-weight:normal;white-space:nowrap;">14</div>
<div style="position:absolute;left:-279.6px;width:600px;top:605.4px;text-align:center;font-size:10px;line-height:10px;color:#444746;font-weight:normal;white-space:nowrap;">15</div>
<div style="position:absolute;left:-279.6px;width:600px;top:624.4px;text-align:center;font-size:10px;line-height:10px;color:#444746;font-weight:normal;white-space:nowrap;">16</div>
<div style="position:absolute;left:-279.6px;width:600px;top:643.4px;text-align:center;font-size:10px;line-height:10px;color:#444746;font-weight:normal;white-space:nowrap;">17</div>
<div style="position:absolute;left:-279.6px;width:600px;top:662.4px;text-align:center;font-size:10px;line-height:10px;color:#444746;font-weight:normal;white-space:nowrap;">18</div>
<div style="position:absolute;left:-279.6px;width:600px;top:681.4px;text-align:center;font-size:10px;line-height:10px;color:#444746;font-weight:normal;white-space:nowrap;">19</div>
<div style="position:absolute;left:-279.6px;width:600px;top:700.4px;text-align:center;font-size:10px;line-height:10px;color:#444746;font-weight:normal;white-space:nowrap;">20</div>
<div style="position:absolute;left:-279.6px;width:600px;top:719.4px;text-align:center;font-size:10px;line-height:10px;color:#444746;font-weight:normal;white-space:nowrap;">21</div>
<div style="position:absolute;left:-279.6px;width:600px;top:738.4px;text-align:center;font-size:10px;line-height:10px;color:#444746;font-weight:normal;white-space:nowrap;">22</div>
<div style="position:absolute;left:-279.6px;width:600px;top:757.4px;text-align:center;font-size:10px;line-height:10px;color:#444746;font-weight:normal;white-space:nowrap;">23</div>
<div style="position:absolute;left:-279.6px;width:600px;top:776.4px;text-align:center;font-size:10px;line-height:10px;color:#444746;font-weight:normal;white-space:nowrap;">24</div>
<div style="position:absolute;left:-279.6px;width:600px;top:795.4px;text-align:center;font-size:10px;line-height:10px;color:#444746;font-weight:normal;white-space:nowrap;">25</div>
<div style="position:absolute;left:-279.6px;width:600px;top:814.4px;text-align:center;font-size:10px;line-height:10px;color:#444746;font-weight:normal;white-space:nowrap;">26</div>
<div style="position:absolute;left:-279.6px;width:600px;top:833.4px;text-align:center;font-size:10px;line-height:10px;color:#444746;font-weight:normal;white-space:nowrap;">27</div>
<div style="position:absolute;left:-279.6px;width:600px;top:852.4px;text-align:center;font-size:10px;line-height:10px;color:#444746;font-weight:normal;white-space:nowrap;">28</div>
<div style="position:absolute;left:-279.6px;width:600px;top:871.4px;text-align:center;font-size:10px;line-height:10px;color:#444746;font-weight:normal;white-space:nowrap;">29</div>
<div style="position:absolute;left:-279.6px;width:600px;top:890.4px;text-align:center;font-size:10px;line-height:10px;color:#444746;font-weight:normal;white-space:nowrap;">30</div>
<div style="position:absolute;left:-279.6px;width:600px;top:909.4px;text-align:center;font-size:10px;line-height:10px;color:#444746;font-weight:normal;white-space:nowrap;">31</div>
<div style="position:absolute;left:-279.6px;width:600px;top:928.4px;text-align:center;font-size:10px;line-height:10px;color:#444746;font-weight:normal;white-space:nowrap;">32</div>
<div style="position:absolute;left:-279.6px;width:600px;top:947.4px;text-align:center;font-size:10px;line-height:10px;color:#444746;font-weight:normal;white-space:nowrap;">33</div>
<div style="position:absolute;left:-279.6px;width:600px;top:966.4px;text-align:center;font-size:10px;line-height:10px;color:#444746;font-weight:normal;white-space:nowrap;">34</div>
<div style="position:absolute;left:-279.6px;width:600px;top:985.4px;text-align:center;font-size:10px;line-height:10px;color:#444746;font-weight:normal;white-space:nowrap;">35</div>
<div style="position:absolute;left:41px;top:237px;width:159px;height:48px;background:#039a9b;"></div>
<div style="position:absolute;left:41px;top:286px;width:159px;height:39px;background:#039a9b;"></div>
<div style="position:absolute;left:201px;top:237px;width:142px;height:48px;background:#fec844;"></div>
<div style="position:absolute;left:201px;top:286px;width:142px;height:39px;background:#fec844;"></div>
<div style="position:absolute;left:470px;top:237px;width:411px;height:48px;background:#039a9b;"></div>
<div style="position:absolute;left:470px;top:286px;width:103px;height:39px;background:#fec844;"></div>
<div style="position:absolute;left:40px;top:285px;width:304px;height:1px;background:#000000;"></div>
<div style="position:absolute;left:40px;top:325px;width:1785px;height:1px;background:#000000;"></div>
<div style="position:absolute;left:40px;top:373px;width:1785px;height:1px;background:#000000;"></div>
<div style="position:absolute;left:573px;top:285px;width:309px;height:1px;background:#000000;"></div>
<div style="position:absolute;left:200px;top:285px;width:1px;height:41px;background:#000000;"></div>
<div style="position:absolute;left:343px;top:236px;width:1px;height:90px;background:#000000;"></div>
<div style="position:absolute;left:573px;top:285px;width:1px;height:41px;background:#000000;"></div>
<div style="position:absolute;left:677px;top:285px;width:1px;height:41px;background:#000000;"></div>
<div style="position:absolute;left:789px;top:285px;width:1px;height:41px;background:#000000;"></div>
<div style="position:absolute;left:881px;top:285px;width:1px;height:41px;background:#000000;"></div>
<div style="position:absolute;left:40px;top:325px;width:1px;height:49px;background:#000000;"></div>
<div style="position:absolute;left:200px;top:325px;width:1px;height:49px;background:#000000;"></div>
<div style="position:absolute;left:343px;top:325px;width:1px;height:49px;background:#000000;"></div>
<div style="position:absolute;left:469px;top:325px;width:1px;height:49px;background:#000000;"></div>
<div style="position:absolute;left:573px;top:325px;width:1px;height:49px;background:#000000;"></div>
<div style="position:absolute;left:677px;top:325px;width:1px;height:49px;background:#000000;"></div>
<div style="position:absolute;left:789px;top:325px;width:1px;height:49px;background:#000000;"></div>
<div style="position:absolute;left:881px;top:325px;width:1px;height:49px;background:#000000;"></div>
<div style="position:absolute;left:974px;top:325px;width:1px;height:49px;background:#000000;"></div>
<div style="position:absolute;left:1066px;top:325px;width:1px;height:49px;background:#000000;"></div>
<div style="position:absolute;left:1169px;top:325px;width:1px;height:49px;background:#000000;"></div>
<div style="position:absolute;left:1526px;top:325px;width:1px;height:49px;background:#000000;"></div>
<div style="position:absolute;left:1651px;top:325px;width:1px;height:49px;background:#000000;"></div>
<div style="position:absolute;left:1824px;top:325px;width:1px;height:49px;background:#000000;"></div>
<div style="position:absolute;left:573px;top:237px;width:1px;height:48px;background:#0a8f90;"></div>
<div style="position:absolute;left:677px;top:237px;width:1px;height:48px;background:#0a8f90;"></div>
<div style="position:absolute;left:789px;top:237px;width:1px;height:48px;background:#0a8f90;"></div>
<div style="position:absolute;left:0px;top:374px;width:1859px;height:4px;background:#c7c7c7;"></div>
<div style="position:absolute;left:975px;top:378px;width:91px;height:33px;background:#b7e1cd;"></div>
<div style="position:absolute;left:-179.5px;width:600px;top:252.5px;text-align:center;font-size:15px;line-height:15px;color:#ffffff;font-weight:bold;white-space:nowrap;">Salesperson Name:</div>
<div style="position:absolute;left:-28.0px;width:600px;top:253.25px;text-align:center;font-size:15.5px;line-height:15.5px;color:#000;font-weight:normal;white-space:nowrap;">Jack</div>
<div style="position:absolute;left:221.5px;width:600px;top:252.5px;text-align:center;font-size:15px;line-height:15px;color:#ffffff;font-weight:bold;white-space:nowrap;">Date</div>
<div style="position:absolute;left:325.5px;width:600px;top:243.8px;text-align:center;font-size:14.6px;line-height:16.7px;color:#ffffff;font-weight:bold;white-space:nowrap;">Leads<br>Worked</div>
<div style="position:absolute;left:433.5px;width:600px;top:252.7px;text-align:center;font-size:14.6px;line-height:14.6px;color:#ffffff;font-weight:bold;white-space:nowrap;">Converted</div>
<div style="position:absolute;left:535.5px;width:600px;top:252.8px;text-align:center;font-size:14.4px;line-height:14.4px;color:#ffffff;font-weight:bold;white-space:nowrap;">Disqualified</div>
<div style="position:absolute;left:-179.5px;width:600px;top:297.0px;text-align:center;font-size:15px;line-height:15px;color:#ffffff;font-weight:bold;white-space:nowrap;">Designation</div>
<div style="position:absolute;left:-28.0px;width:600px;top:296.75px;text-align:center;font-size:15.5px;line-height:15.5px;color:#000;font-weight:normal;white-space:nowrap;">Sales</div>
<div style="position:absolute;left:221.5px;width:600px;top:297.0px;text-align:center;font-size:15px;line-height:15px;color:#000;font-weight:normal;white-space:nowrap;">30-Apr-2025</div>
<div style="position:absolute;left:325.5px;width:600px;top:297.0px;text-align:center;font-size:15px;line-height:15px;color:#000;font-weight:normal;white-space:nowrap;">3</div>
<div style="position:absolute;left:433.5px;width:600px;top:297.0px;text-align:center;font-size:15px;line-height:15px;color:#000;font-weight:normal;white-space:nowrap;">0</div>
<div style="position:absolute;left:535.5px;width:600px;top:297.0px;text-align:center;font-size:15px;line-height:15px;color:#000;font-weight:normal;white-space:nowrap;">1</div>
<div style="position:absolute;left:-179.5px;width:600px;top:342.5px;text-align:center;font-size:12.9px;line-height:14px;color:#000;font-weight:bold;white-space:nowrap;">Lead Name</div>
<div style="position:absolute;left:-28.0px;width:600px;top:342.5px;text-align:center;font-size:12.9px;line-height:14px;color:#000;font-weight:bold;white-space:nowrap;">Phone number</div>
<div style="position:absolute;left:106.5px;width:600px;top:342.5px;text-align:center;font-size:12.9px;line-height:14px;color:#000;font-weight:bold;white-space:nowrap;">Email</div>
<div style="position:absolute;left:221.5px;width:600px;top:342.5px;text-align:center;font-size:12.9px;line-height:14px;color:#000;font-weight:bold;white-space:nowrap;">Source</div>
<div style="position:absolute;left:325.5px;width:600px;top:342.5px;text-align:center;font-size:12.9px;line-height:14px;color:#000;font-weight:bold;white-space:nowrap;">Catagory</div>
<div style="position:absolute;left:433.5px;width:600px;top:342.5px;text-align:center;font-size:12.9px;line-height:14px;color:#000;font-weight:bold;white-space:nowrap;">Lead Status</div>
<div style="position:absolute;left:535.5px;width:600px;top:335.5px;text-align:center;font-size:12.9px;line-height:14px;color:#000;font-weight:bold;white-space:nowrap;">First Contact<br>Date</div>
<div style="position:absolute;left:628.0px;width:600px;top:335.5px;text-align:center;font-size:12.9px;line-height:14px;color:#000;font-weight:bold;white-space:nowrap;">Next followup<br>date</div>
<div style="position:absolute;left:720.5px;width:600px;top:328.5px;text-align:center;font-size:12.9px;line-height:14px;color:#000;font-weight:bold;white-space:nowrap;">Days<br>remaining for<br>followup</div>
<div style="position:absolute;left:818.0px;width:600px;top:342.5px;text-align:center;font-size:12.9px;line-height:14px;color:#000;font-weight:bold;white-space:nowrap;">Action taken</div>
<div style="position:absolute;left:1048.0px;width:600px;top:342.5px;text-align:center;font-size:12.9px;line-height:14px;color:#000;font-weight:bold;white-space:nowrap;">Next followup about</div>
<div style="position:absolute;left:1289.0px;width:600px;top:335.5px;text-align:center;font-size:12.9px;line-height:14px;color:#000;font-weight:bold;white-space:nowrap;">Last Contacted<br>Date</div>
<div style="position:absolute;left:1438.0px;width:600px;top:342.5px;text-align:center;font-size:12.9px;line-height:14px;color:#000;font-weight:bold;white-space:nowrap;">Contact History</div>
<div style="position:absolute;left:-179.5px;width:600px;top:388.8px;text-align:center;font-size:12.4px;line-height:12.4px;color:#000;font-weight:normal;white-space:nowrap;">Ramesh</div>
<div style="position:absolute;left:-28.0px;width:600px;top:388.7px;text-align:center;font-size:12.6px;line-height:12.6px;color:#000;font-weight:normal;white-space:nowrap;">123456</div>
<div style="position:absolute;left:106.5px;width:600px;top:388.8px;text-align:center;font-size:12.4px;line-height:12.4px;color:#000;font-weight:normal;white-space:nowrap;">Ramesh@gmail.com</div>
<div style="position:absolute;left:535.5px;width:600px;top:395.7px;text-align:center;font-size:12.6px;line-height:12.6px;color:#000;font-weight:normal;white-space:nowrap;">19March</div>
<div style="position:absolute;left:628.0px;width:600px;top:395.7px;text-align:center;font-size:12.6px;line-height:12.6px;color:#000;font-weight:normal;white-space:nowrap;">8May</div>
<div style="position:absolute;left:720.5px;width:600px;top:395.7px;text-align:center;font-size:12.6px;line-height:12.6px;color:#000;font-weight:normal;white-space:nowrap;">8</div>
<div style="position:absolute;left:1530px;top:395.5px;font-size:12.8px;line-height:12.8px;color:#000;font-weight:normal;white-space:nowrap;">04/30/2025 12:56 AM</div>
<div style="position:absolute;left:1438.0px;width:600px;top:381.0px;text-align:center;font-size:12.4px;line-height:14px;color:#000;font-weight:normal;white-space:nowrap;">30-Apr-2025 12:56:06 AM,<br>30-Apr-2025 12:52:56 AM</div>
<div style="position:absolute;left:478px;top:394px;width:87px;height:15px;background:#5bb8f5;border-radius:7.5px"></div>
<div style="position:absolute;left:215.0px;width:600px;top:395.6px;text-align:center;font-size:12.8px;line-height:12.8px;color:#ffffff;font-weight:normal;white-space:nowrap;">Meta</div>
<svg style="position:absolute;left:551.0px;top:399.0px;width:9px;height:5px" viewBox="0 0 9 5" fill="#ffffff" ><path d="M0 0H9L4.5 5Z"/></svg>
<div style="position:absolute;left:582px;top:394px;width:87px;height:15px;background:#bfe1f6;border-radius:7.5px"></div>
<div style="position:absolute;left:319.0px;width:600px;top:395.6px;text-align:center;font-size:12.8px;line-height:12.8px;color:#0a53a8;font-weight:normal;white-space:nowrap;">Study Vi…</div>
<svg style="position:absolute;left:655.0px;top:399.0px;width:9px;height:5px" viewBox="0 0 9 5" fill="#0a53a8" ><path d="M0 0H9L4.5 5Z"/></svg>
<div style="position:absolute;left:686px;top:394px;width:95px;height:15px;background:#ffe5a0;border-radius:7.5px"></div>
<div style="position:absolute;left:427.0px;width:600px;top:395.6px;text-align:center;font-size:12.8px;line-height:12.8px;color:#473821;font-weight:normal;white-space:nowrap;">Warm</div>
<svg style="position:absolute;left:767.0px;top:399.0px;width:9px;height:5px" viewBox="0 0 9 5" fill="#473821" ><path d="M0 0H9L4.5 5Z"/></svg>
<div style="position:absolute;left:1075px;top:394px;width:86px;height:15px;background:#d4edbc;border-radius:7.5px"></div>
<div style="position:absolute;left:811.5px;width:600px;top:395.6px;text-align:center;font-size:12.8px;line-height:12.8px;color:#11734b;font-weight:normal;white-space:nowrap;">Whatsapp</div>
<svg style="position:absolute;left:1147.0px;top:399.0px;width:9px;height:5px" viewBox="0 0 9 5" fill="#11734b" ><path d="M0 0H9L4.5 5Z"/></svg>
<div style="position:absolute;left:41px;top:236px;width:159px;height:1px;background:#0b57d0;"></div>
<div style="position:absolute;left:41px;top:236px;width:1px;height:49px;background:#0b57d0;"></div>
<div style="position:absolute;left:200px;top:236px;width:1px;height:49px;background:#0b57d0;"></div>
<div style="position:absolute;left:41px;top:284px;width:160px;height:1px;background:#0b57d0;"></div>
<div style="position:absolute;left:196.4px;top:281.7px;width:7.6px;height:7.6px;border-radius:50%;background:#0b57d0;border:1px solid #fff;box-sizing:content-box"></div>
<div style="position:absolute;left:0px;top:995px;width:1859px;height:11px;background:#ffffff;"></div>
<div style="position:absolute;left:41px;top:995px;width:1818px;height:1px;background:#e2e3e3;"></div>
<div style="position:absolute;left:0px;top:995px;width:40px;height:11px;background:#f8f8f8;"></div>
<div style="position:absolute;left:40px;top:995px;width:1px;height:10px;background:#c4c7c5;"></div>
<div style="position:absolute;left:43px;top:996px;width:1122px;height:8px;background:#dadce0;border-radius:4px"></div>
<div style="position:absolute;left:0px;top:1006px;width:1859px;height:1px;background:#e1e3e1;"></div>
<div style="position:absolute;left:0px;top:1007px;width:1859px;height:33px;background:#f9fbfd;"></div>
<div style="position:absolute;left:50.2px;top:1023.6px;width:9.8px;height:1.5px;background:#444746;"></div>
<div style="position:absolute;left:54.4px;top:1019.4px;width:1.5px;height:9.8px;background:#444746;"></div>
<div style="position:absolute;left:85.5px;top:1019.4px;width:12.5px;height:1.4px;background:#444746;"></div>
<div style="position:absolute;left:85.5px;top:1023.5px;width:12.5px;height:1.4px;background:#444746;"></div>
<div style="position:absolute;left:85.5px;top:1027.6px;width:12.5px;height:1.4px;background:#444746;"></div>
<div style="position:absolute;left:527px;top:1007px;width:80px;height:33px;background:#e1e9f7;"></div>
<div style="position:absolute;left:132.5px;top:1018px;font-size:13.8px;line-height:13.8px;color:#444746;font-weight:normal;white-space:nowrap;">Dashboard</div>
<svg style="position:absolute;left:210.0px;top:1022.5px;width:8px;height:4px" viewBox="0 0 8 4" fill="#444746" ><path d="M0 0H8L4.0 4Z"/></svg>
<div style="position:absolute;left:241px;top:1018px;font-size:13.8px;line-height:13.8px;color:#444746;font-weight:normal;white-space:nowrap;">Leads Database</div>
<svg style="position:absolute;left:350.0px;top:1022.5px;width:8px;height:4px" viewBox="0 0 8 4" fill="#444746" ><path d="M0 0H8L4.0 4Z"/></svg>
<div style="position:absolute;left:382px;top:1018px;font-size:13.8px;line-height:13.8px;color:#444746;font-weight:normal;white-space:nowrap;">Received Resumes</div>
<svg style="position:absolute;left:507.0px;top:1022.5px;width:8px;height:4px" viewBox="0 0 8 4" fill="#444746" ><path d="M0 0H8L4.0 4Z"/></svg>
<div style="position:absolute;left:618px;top:1018px;font-size:13.8px;line-height:13.8px;color:#444746;font-weight:normal;white-space:nowrap;">Converted</div>
<svg style="position:absolute;left:693.0px;top:1022.5px;width:8px;height:4px" viewBox="0 0 8 4" fill="#444746" ><path d="M0 0H8L4.0 4Z"/></svg>
<div style="position:absolute;left:723px;top:1018px;font-size:13.8px;line-height:13.8px;color:#444746;font-weight:normal;white-space:nowrap;">Disqualified Leads</div>
<svg style="position:absolute;left:848.0px;top:1022.5px;width:8px;height:4px" viewBox="0 0 8 4" fill="#444746" ><path d="M0 0H8L4.0 4Z"/></svg>
<svg style="position:absolute;left:537.55px;top:1016.55px;width:15.5px;height:15.5px" viewBox="0 0 24 24" fill="#0b57d0" ><path d="M18 8h-1V6c0-2.76-2.24-5-5-5S7 3.24 7 6v2H6c-1.1 0-2 .9-2 2v10c0 1.1.9 2 2 2h12c1.1 0 2-.9 2-2V10c0-1.1-.9-2-2-2zm-6 9c-1.1 0-2-.9-2-2s.9-2 2-2 2 .9 2 2-.9 2-2 2zm3.1-9H8.9V6c0-1.71 1.39-3.1 3.1-3.1 1.71 0 3.1 1.39 3.1 3.1v2z"/></svg>
<div style="position:absolute;left:557px;top:1018.5px;font-size:12px;line-height:12px;color:#0b57d0;font-weight:bold;white-space:nowrap;">SP1</div>
<svg style="position:absolute;left:588.0px;top:1022.5px;width:8px;height:4px" viewBox="0 0 8 4" fill="#0b57d0" ><path d="M0 0H8L4.0 4Z"/></svg>
</body></html>
